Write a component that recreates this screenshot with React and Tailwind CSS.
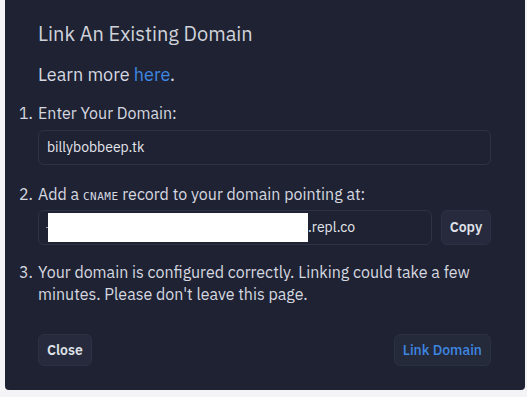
import React from 'react';

const App = () => {
  return (
    <div className="min-h-[397px] w-[527px] bg-[#f4f4f6] font-['IBM_Plex_Sans','Noto_Sans',sans-serif]">
      {/* Modal panel */}
      <div className="ml-[5px] w-[520px] h-[390px] bg-[#1e2232] rounded-b-[4px] pl-[33px] pr-[34px] text-[#d6d8e0]">
        <h2 className="pt-[22px] text-[20px] leading-[24px] text-[#d0d2da]">Link An Existing Domain</h2>

        <p className="mt-[17px] text-[18px] leading-[24px]">
          Learn more <a className="text-[#3e87e3]">here</a>.
        </p>

        {/* Step 1 */}
        <div className="mt-[16px] flex -ml-[19px] text-[16px] leading-[20px]">
          <span className="w-[19px]">1.</span>
          <span>Enter Your Domain:</span>
        </div>
        <div className="mt-[7px] h-[35px] rounded-[6px] border border-[#2e3244] flex items-center px-[8px] text-[14px] text-[#e4e6ec]">
          billybobbeep.tk
        </div>

        {/* Step 2 */}
        <div className="mt-[19px] flex -ml-[19px] h-[20px] text-[16px] leading-[20px]">
          <span className="w-[19px]">2.</span>
          <span>
            Add a <span className="font-['DejaVu_Sans_Mono',monospace] text-[11px] leading-none uppercase tracking-[0.5px]">cname</span> record to your domain pointing at:
          </span>
        </div>
        <div className="mt-[6px] flex gap-[9px]">
          <div className="flex-1 h-[35px] rounded-[6px] border border-[#2e3244] flex items-center pl-[7px] pr-[8px] text-[14px] text-[#e4e6ec]">
            <span className="inline-block w-[2px] h-px bg-[#9a9cab]"></span>
            <span className="inline-block w-[260px] h-[29px] bg-white"></span>
            <span>.repl.co</span>
          </div>
          <button className="w-[50px] h-[35px] rounded-[6px] border border-[#2c3043] bg-[#262a3c] text-[14px] font-semibold text-[#dfe1e8]">
            Copy
          </button>
        </div>

        {/* Step 3 */}
        <div className="mt-[16px] flex -ml-[19px] text-[16px] leading-[22px]">
          <span className="w-[19px] shrink-0">3.</span>
          <span>
            Your domain is configured correctly. Linking could take a few
            <br />
            minutes. Please don't leave this page.
          </span>
        </div>

        {/* Actions */}
        <div className="mt-[29px] flex justify-between">
          <button className="h-[32px] px-[8px] rounded-[6px] border border-[#2c3043] bg-[#262a3c] text-[14px] font-semibold text-[#dfe1e8]">
            Close
          </button>
          <button className="h-[32px] px-[8px] rounded-[6px] border border-[#2c3043] bg-[#252a3b] text-[14px] font-medium text-[#3e87e3]">
            Link Domain
          </button>
        </div>
      </div>
    </div>
  );
};

export default App;
